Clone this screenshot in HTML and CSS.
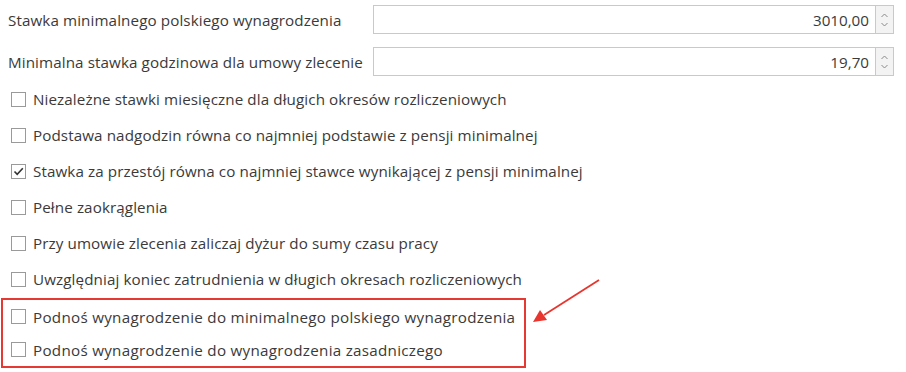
FILE: index.html
```html
<!DOCTYPE html>
<html lang="pl">
<head>
    <meta charset="UTF-8">
    <title>Ustawienia płacy minimalnej</title>
    <link rel="stylesheet" href="styles.css">
</head>
<body>
    <div class="settings">
        <div class="fields">
            <label class="field-label">Stawka minimalnego polskiego wynagrodzenia</label>
            <div class="spin">
                <input class="spin-input" type="text" value="3010,00">
                <div class="spin-buttons">
                    <svg width="9" height="18" viewBox="0 0 9 18"><path d="M1.5 6 L4.5 3 L7.5 6 M1.5 12 L4.5 15 L7.5 12" fill="none" stroke="#8a8a8a" stroke-width="1"/></svg>
                </div>
            </div>
            <label class="field-label">Minimalna stawka godzinowa dla umowy zlecenie</label>
            <div class="spin">
                <input class="spin-input" type="text" value="19,70">
                <div class="spin-buttons">
                    <svg width="9" height="18" viewBox="0 0 9 18"><path d="M1.5 6 L4.5 3 L7.5 6 M1.5 12 L4.5 15 L7.5 12" fill="none" stroke="#8a8a8a" stroke-width="1"/></svg>
                </div>
            </div>
        </div>

        <div class="checks">
            <label class="check"><span class="box"></span>Niezależne stawki miesięczne dla długich okresów rozliczeniowych</label>
            <label class="check"><span class="box"></span>Podstawa nadgodzin równa co najmniej podstawie z pensji minimalnej</label>
            <label class="check"><span class="box checked"><svg width="13" height="13" viewBox="0 0 13 13"><path d="M2.5 6.5 L5.2 9.3 L10.8 3.2" fill="none" stroke="#333" stroke-width="1.6"/></svg></span>Stawka za przestój równa co najmniej stawce wynikającej z pensji minimalnej</label>
            <label class="check"><span class="box"></span>Pełne zaokrąglenia</label>
            <label class="check"><span class="box"></span>Przy umowie zlecenia zaliczaj dyżur do sumy czasu pracy</label>
            <label class="check"><span class="box"></span>Uwzględniaj koniec zatrudnienia w długich okresach rozliczeniowych</label>
            <div class="highlight">
                <label class="check"><span class="box"></span>Podnoś wynagrodzenie do minimalnego polskiego wynagrodzenia</label>
                <label class="check"><span class="box"></span>Podnoś wynagrodzenie do wynagrodzenia zasadniczego</label>
            </div>
        </div>

        <svg class="arrow" width="80" height="56" viewBox="0 0 80 56">
            <line x1="73" y1="3" x2="18" y2="38" stroke="#e8352e" stroke-width="1.8"/>
            <path d="M7 45 L14 33 L21 43 Z" fill="#e8352e"/>
        </svg>
    </div>
</body>
</html>
```

FILE: styles.css
```css
body {
    margin: 0;
    background: #ffffff;
    font-family: "Open Sans", "Noto Sans", Arial, sans-serif;
    font-size: 15.2px;
    letter-spacing: 0.1px;
    color: #3a3a3a;
}
.settings {
    position: relative;
    width: 906px;
    height: 372px;
}
.fields {
    display: grid;
    grid-template-columns: 365px 521px;
    row-gap: 13px;
    align-items: center;
    padding: 5px 0 0 8px;
}
.field-label {
    white-space: nowrap;
}
.spin {
    display: flex;
    height: 29px;
}
.spin-input {
    flex: 1;
    min-width: 0;
    box-sizing: border-box;
    height: 29px;
    border: 1px solid #c9c9c9;
    border-right: none;
    padding: 0 6px;
    text-align: right;
    font: inherit;
    color: #3a3a3a;
    background: #ffffff;
}
.spin-buttons {
    width: 19px;
    box-sizing: border-box;
    border: 1px solid #c9c9c9;
    background: #f3f3f3;
    display: flex;
    align-items: center;
    justify-content: center;
}
.checks {
    display: flex;
    flex-direction: column;
    padding: 5px 0 0 0;
}
.check {
    display: flex;
    align-items: center;
    height: 36px;
    padding-left: 11px;
    white-space: nowrap;
}
.box {
    width: 15px;
    height: 15px;
    box-sizing: border-box;
    border: 1px solid #9a9a9a;
    background: #ffffff;
    margin-right: 7px;
    display: flex;
    align-items: center;
    justify-content: center;
    flex-shrink: 0;
}
.highlight {
    width: 521px;
    margin: 1px 0 0 1px;
    border: 2px solid #e53a33;
    display: flex;
    flex-direction: column;
    padding: 0;
}
.highlight .check {
    height: 33px;
    padding-left: 8px;
    letter-spacing: 0.28px;
}
.arrow {
    position: absolute;
    left: 526px;
    top: 277px;
}
```
